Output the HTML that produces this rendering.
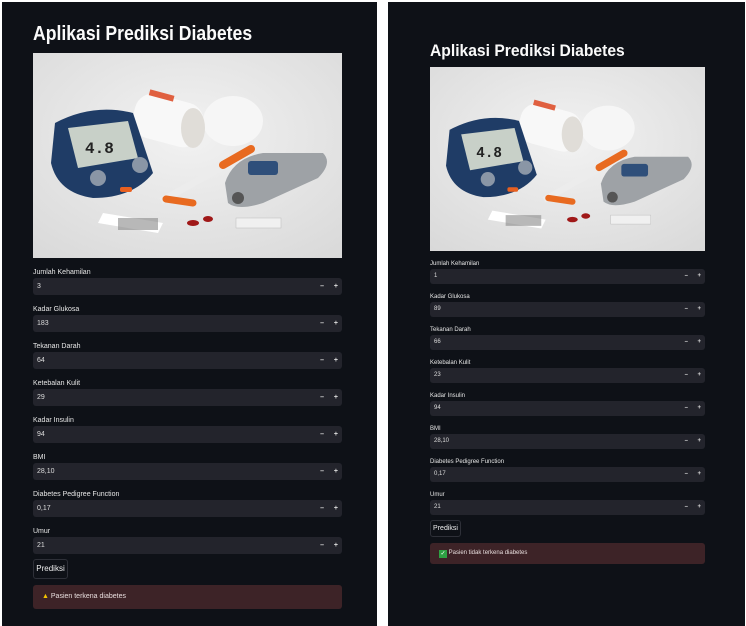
<!DOCTYPE html>
<html><head><meta charset="utf-8"><style>
*{margin:0;padding:0;box-sizing:border-box}
body{width:746px;height:626px;background:#fff;position:relative;overflow:hidden;font-family:"Liberation Sans",sans-serif;color:#fafafa}
.p{position:absolute;background:#0e1117}
.a{position:absolute}
.t{position:absolute;font-weight:bold;white-space:nowrap;transform-origin:0 0}
.lab{position:absolute;white-space:nowrap;color:#e6e6e6}
.in{position:absolute;background:#23242c;border-radius:3px}
.in span{position:absolute;left:4px;color:#ddd}
.in i{position:absolute;font-style:normal;color:#ddd;font-weight:bold}
.btn{position:absolute;border:1px solid #2e3038;border-radius:3px;background:#0e1117;color:#eee;text-align:center}
.al{position:absolute;background:#3d2327;border-radius:3px;color:#e8dede}
svg{position:absolute}
</style></head><body>
<div class="p" style="left:2px;top:2px;width:375px;height:624px"></div>
<div class="p" style="left:388px;top:2px;width:357px;height:624px"></div>

<div class="t" style="left:33px;top:23px;font-size:20px;transform:scaleX(0.88)">Aplikasi Prediksi Diabetes</div>
<div class="t" style="left:430px;top:41px;font-size:17px;transform:scaleX(0.92)">Aplikasi Prediksi Diabetes</div>

<svg style="left:33px;top:53px" width="309" height="205" viewBox="0 0 309 205" preserveAspectRatio="none">
<g id="img">
<defs><radialGradient id="g" cx="0.5" cy="0.4" r="0.8"><stop offset="0" stop-color="#f2f2f2"/><stop offset="1" stop-color="#d8d8d8"/></radialGradient></defs>
<rect width="309" height="205" fill="url(#g)"/>
<ellipse cx="200" cy="68" rx="30" ry="25" fill="#f6f6f6"/>
<rect x="100" y="45" width="70" height="45" rx="18" fill="#f8f8f8" transform="rotate(15 135 67)"/>
<rect x="110" y="42" width="25" height="6" fill="#e06040" transform="rotate(15 135 67)"/>
<ellipse cx="160" cy="75" rx="12" ry="20" fill="#e0ddd8"/>
<path d="M22 70 Q60 50 100 60 L120 120 Q100 145 60 145 Q25 140 18 110Z" fill="#1f3c66"/>
<path d="M35 75 L95 68 L105 105 L45 115Z" fill="#c8d0c8"/>
<text x="52" y="100" font-size="16" font-family="Liberation Mono" fill="#222" font-weight="bold">4.8</text>
<circle cx="65" cy="125" r="8" fill="#8a96a6"/><circle cx="107" cy="112" r="8" fill="#8a96a6"/>
<rect x="87" y="134" width="12" height="5" rx="2" fill="#e86020"/>
<path d="M128 148 L218 98" stroke="#ececec" stroke-width="7"/>
<path d="M190 112 L218 96" stroke="#e86a20" stroke-width="8" stroke-linecap="round"/>
<path d="M133 146 L160 150" stroke="#e86a20" stroke-width="7" stroke-linecap="round"/>
<path d="M192 130 Q200 105 230 100 L290 100 Q300 110 285 125 L230 150 Q205 158 195 150Z" fill="#9ea2a6"/>
<rect x="215" y="108" width="30" height="14" rx="3" fill="#2f4f7a"/>
<circle cx="205" cy="145" r="6" fill="#555"/>
<path d="M70 160 L130 170 L125 180 L65 170Z" fill="#fff"/>
<rect x="85" y="165" width="40" height="12" fill="#888" opacity=".6"/>
<ellipse cx="160" cy="170" rx="6" ry="3" fill="#a01818"/><ellipse cx="175" cy="166" rx="5" ry="3" fill="#a01818"/>
<rect x="203" y="165" width="45" height="10" fill="#f0f0f0" stroke="#bbb" stroke-width=".5"/>
</g></svg>
<svg style="left:430px;top:67px" width="275" height="184" viewBox="0 0 309 205" preserveAspectRatio="none"><use href="#img"/></svg>

<div id="L"></div>
<script>
function build(o){
 let h='';
 const names=["Jumlah Kehamilan","Kadar Glukosa","Tekanan Darah","Ketebalan Kulit","Kadar Insulin","BMI","Diabetes Pedigree Function","Umur"];
 for(let k=0;k<8;k++){
  const y=o.y0+k*o.dy;
  h+=`<div class="lab" style="left:${o.x}px;top:${y-o.lh}px;font-size:${o.fs}px">${names[k]}</div>`;
  h+=`<div class="in" style="left:${o.x}px;top:${y}px;width:${o.w}px;height:${o.h}px;font-size:${o.fs}px;line-height:${o.h}px"><span>${o.v[k]}</span><i style="right:${o.mr}px">–</i><i style="right:4px">+</i></div>`;
 }
 h+=`<div class="btn" style="left:${o.x}px;top:${o.by}px;width:${o.bw}px;height:${o.bh}px;font-size:${o.fs+1}px;line-height:${o.bh-2}px">Prediksi</div>`;
 h+=`<div class="al" style="left:${o.x}px;top:${o.ay}px;width:${o.w}px;height:${o.ah}px;font-size:${o.fs}px;line-height:${o.ah}px;padding-left:9px">${o.msg}</div>`;
 return h;
}
document.getElementById('L').innerHTML=
build({x:33,w:309,y0:278,dy:37,h:17,lh:9,fs:7,mr:18,v:["3","183","64","29","94","28,10","0,17","21"],by:559,bw:35,bh:20,ay:585,ah:24,msg:'<span style="color:#f5c400">▲</span> Pasien terkena diabetes'})+
build({x:430,w:275,y0:269,dy:33,h:15,lh:8,fs:6,mr:17,v:["1","89","66","23","94","28,10","0,17","21"],by:520,bw:31,bh:17,ay:543,ah:21,msg:'<span style="display:inline-block;width:8px;height:8px;background:#2ea043;color:#fff;font-size:6px;line-height:8px;text-align:center;vertical-align:-1px">✓</span> Pasien tidak terkena diabetes'});
</script>
</body></html>
